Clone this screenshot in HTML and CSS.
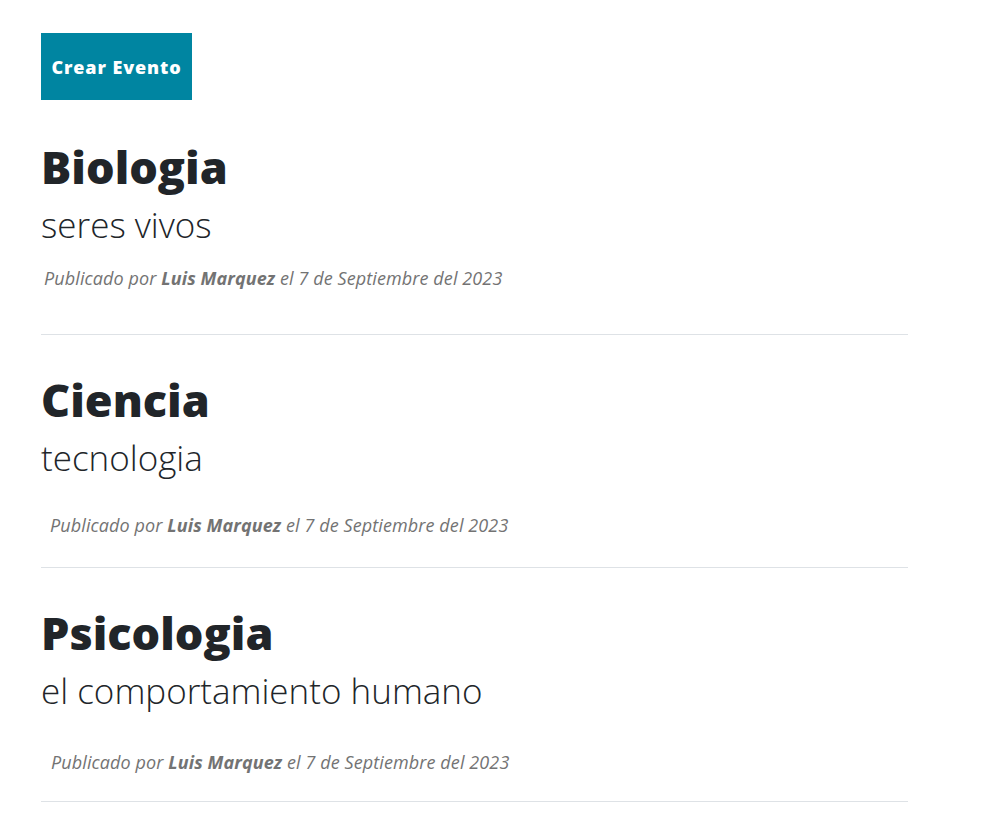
FILE: index.html
```html
<!DOCTYPE html>
<html lang="es">
<head>
<meta charset="utf-8">
<title>Eventos</title>
<link rel="stylesheet" href="styles.css">
</head>
<body>
<main class="page">
  <a class="btn-create" href="#">Crear Evento</a>
  <section class="post-list">
    <article class="post-preview">
      <a class="post-link" href="#">
        <h2 class="post-title">Biologia</h2>
        <h3 class="post-subtitle">seres vivos</h3>
      </a>
      <p class="post-meta meta-a">Publicado por <strong>Luis Marquez</strong> el 7 de Septiembre del 2023</p>
    </article>
    <hr class="divider">
    <article class="post-preview">
      <a class="post-link" href="#">
        <h2 class="post-title">Ciencia</h2>
        <h3 class="post-subtitle">tecnologia</h3>
      </a>
      <p class="post-meta meta-b">Publicado por <strong>Luis Marquez</strong> el 7 de Septiembre del 2023</p>
    </article>
    <hr class="divider">
    <article class="post-preview">
      <a class="post-link" href="#">
        <h2 class="post-title">Psicologia</h2>
        <h3 class="post-subtitle">el comportamiento humano</h3>
      </a>
      <p class="post-meta meta-c">Publicado por <strong>Luis Marquez</strong> el 7 de Septiembre del 2023</p>
    </article>
    <hr class="divider">
  </section>
</main>
</body>
</html>
```
FILE: styles.css
```css
html, body {
  margin: 0;
  padding: 0;
  background: #fff;
}
body {
  font-family: "Open Sans", "Liberation Sans", sans-serif;
  color: #212529;
}
.page {
  width: 867px;
  padding: 33px 0 0 41px;
}
.btn-create {
  display: inline-flex;
  align-items: center;
  justify-content: center;
  height: 67px;
  width: 151px;
  box-sizing: border-box;
  background: #0085a1;
  color: #fff;
  text-decoration: none;
  font-weight: 800;
  font-size: 18px;
  letter-spacing: 0.9px;
}
.post-list {
  margin-top: 43px;
}
.post-link {
  display: block;
  color: #212529;
  text-decoration: none;
}
.post-title {
  margin: 0;
  font-size: 45px;
  line-height: 48px;
  font-weight: 800;
}
.post-subtitle {
  margin: 14px 0 0;
  font-size: 35px;
  line-height: 40px;
  font-weight: 300;
}
.post-meta {
  margin: 21px 0 0;
  font-style: italic;
  font-size: 18px;
  line-height: 24px;
  letter-spacing: 0.1px;
  color: #737373;
}
.post-meta strong {
  font-weight: 700;
}
.meta-a { padding-left: 3px; margin-bottom: 44px; }
.meta-b { padding-left: 9px; margin-top: 35px; margin-bottom: 30px; }
.meta-c { padding-left: 10px; margin-top: 39px; margin-bottom: 27px; }
.divider {
  margin: 0 0 41px;
  border: 0;
  border-top: 1px solid #dee2e6;
}
```
